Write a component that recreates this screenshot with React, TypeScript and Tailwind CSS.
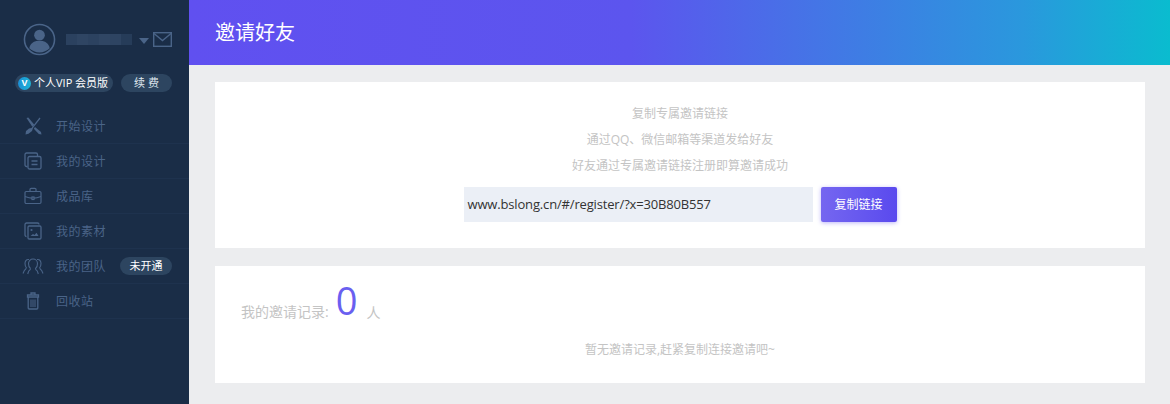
import type { ReactNode } from "react"

const CJK = "font-['Open_Sans','Noto_Sans_CJK_SC',sans-serif]"

const BLUR = ["bg-[#2b415f]", "bg-[#2f4563]", "bg-[#2c4260]", "bg-[#304664]", "bg-[#2e4462]", "bg-[#263c59]"]

const iconClass = "w-[18px] h-[18px] shrink-0 text-[#4a6488]"

const NAV_ITEMS: { label: string; badge?: string; icon: ReactNode }[] = [
  {
    label: "开始设计",
    icon: (
      <svg viewBox="0 0 18 18" className={iconClass} fill="currentColor">
        <path d="M2.500 1l1.800-.5 6 7.200-2 2.100z" />
        <path d="M15.500.5l1 1L9 11l-1 3-3.500 2.800-3 .7.500-3.500 3-2.500 2.500-.5z" />
        <path d="M11 10l6 5 .5 2.500-2.700-.5-5-5.200z" />
      </svg>
    ),
  },
  {
    label: "我的设计",
    icon: (
      <svg viewBox="0 0 18 18" className={iconClass} fill="none" stroke="currentColor" strokeWidth="1.300">
        <path d="M3.500 14.500H2.500A1.500 1.500 0 0 1 1 13V2.500A1.500 1.500 0 0 1 2.500 1H12a1.500 1.500 0 0 1 1.500 1.500V4" />
        <rect x="4" y="4.500" width="13" height="12.500" rx="1.500" />
        <path d="M7.500 9h6M7.500 12.500h6" />
      </svg>
    ),
  },
  {
    label: "成品库",
    icon: (
      <svg viewBox="0 0 18 18" className={iconClass} fill="none" stroke="currentColor" strokeWidth="1.200">
        <rect x="1" y="4.500" width="16" height="12" rx="1.200" />
        <path d="M6 4.500V2.500A1.200 1.200 0 0 1 7.200 1.300h3.600A1.200 1.200 0 0 1 12 2.500v2" />
        <path d="M1 9.500c4 1.500 5.500 1.700 7 1.700M17 9.500c-4 1.500-5.500 1.700-7 1.700" />
        <rect x="8" y="10" width="2" height="2.500" />
      </svg>
    ),
  },
  {
    label: "我的素材",
    icon: (
      <svg viewBox="0 0 18 18" className={iconClass} fill="none" stroke="currentColor" strokeWidth="1.300">
        <path d="M2.500 14.500A1.500 1.500 0 0 1 1 13V2.500A1.500 1.500 0 0 1 2.500 1H13.500A1.500 1.500 0 0 1 15 2.500" />
        <rect x="4" y="4" width="13" height="13" rx="1.200" />
        <circle cx="7.500" cy="8" r="1.100" fill="currentColor" stroke="none" />
        <path d="M6.500 14l2.500-2 1.500 1 2-2.200 2 3.200z" fill="currentColor" stroke="none" />
      </svg>
    ),
  },
  {
    label: "我的团队",
    badge: "未开通",
    icon: (
      <svg viewBox="0 0 22 18" className="w-[22px] h-[18px] shrink-0 text-[#4a6488]" fill="none" stroke="currentColor" strokeWidth="1.100">
        <path d="M8.500 11.500C7 10.500 6.500 8.500 6.500 6.500A4.500 4.500 0 0 1 11 2a4.500 4.500 0 0 1 4.500 4.500c0 2-.5 4-2 5 0 1.500 1 2 1.800 2.500l1 3" />
        <path d="M8.500 11.500c0 1.500-1 2-1.800 2.500l-1 3" />
        <path d="M7 2.500C4 2 3 4.500 3 6.500c0 2 .5 3 1.300 4 0 1.500-.5 2-2 3L1 16.500" />
        <path d="M15 2.500c3-.5 4 2 4 4 0 2-.5 3-1.300 4 0 1.500.5 2 2 3l1.300 3" />
      </svg>
    ),
  },
  {
    label: "回收站",
    icon: (
      <svg viewBox="0 0 18 18" className={iconClass} fill="none" stroke="currentColor" strokeWidth="1.300">
        <path d="M7 2.500V1h4v1.500M3.500 3h11v2h-11z" />
        <path d="M4.200 5v11a1 1 0 0 0 1 1h7.600a1 1 0 0 0 1-1V5" />
        <path d="M7 7.500V15M9 7.500V15M11 7.500V15" strokeWidth="1" />
      </svg>
    ),
  },
]

function Sidebar() {
  return (
    <aside className="w-[189px] shrink-0 bg-[#1a2d47] flex flex-col">
      <div className="h-[64px] flex items-center pl-[23px] pt-[15px]">
        <svg viewBox="0 0 34 34" className="w-[33px] h-[33px] shrink-0 text-[#4a6488]" fill="currentColor">
          <circle cx="17" cy="17" r="15.500" fill="none" stroke="currentColor" strokeWidth="1.600" />
          <circle cx="17" cy="12.500" r="5.500" />
          <path d="M6.500 26c1-5 4-6.500 7-7.500h7c3 1 6 2.500 7 7.500a15 15 0 0 1-21 0z" />
        </svg>
        <div className="ml-[10px] flex">
          {BLUR.map((color, i) => (
            <div key={i} className={`w-[11px] h-[11px] ${color}`} />
          ))}
        </div>
        <div className="ml-[7px] w-0 h-0 border-x-[5px] border-x-transparent border-t-[6px] border-t-[#4a6488] mt-[2px]" />
        <svg viewBox="0 0 19 15" className="ml-[4px] w-[19px] h-[15px] text-[#4a6488]" fill="none" stroke="currentColor" strokeWidth="1.400">
          <rect x="0.700" y="0.700" width="17.600" height="13.600" />
          <path d="M1 1.500l8.500 7 8.500-7" />
        </svg>
      </div>
      <div className="h-[45px] pl-[15px] pt-[10px] flex items-start gap-[8px]">
        <div className="w-[98px] h-[18px] rounded-full bg-[#2d4560] flex items-center pl-[3px]">
          <span className="w-[13px] h-[13px] rounded-full bg-gradient-to-r from-[#1c8fd6] to-[#1fb5d6] text-white text-[9px] font-bold leading-[13px] text-center font-['Liberation_Sans',sans-serif]">
            V
          </span>
          <span className={`ml-[3px] text-[11px] text-white whitespace-nowrap ${CJK}`}>个人VIP 会员版</span>
        </div>
        <div className={`w-[51px] h-[18px] rounded-full bg-[#2d4560] text-center text-[11px] leading-[18px] text-[#dfe5ee] ${CJK}`}>
          续 费
        </div>
      </div>
      <nav className="flex flex-col">
        {NAV_ITEMS.map((item) => (
          <div key={item.label} className="h-[35px] border-b border-[#1e324e] flex items-center pl-[24px]">
            <div className="w-[18px] flex justify-center">{item.icon}</div>
            <span className={`ml-[14px] pt-[1px] text-[12px] tracking-[0.5px] text-[#4a6488] ${CJK}`}>{item.label}</span>
            {item.badge && (
              <span className={`ml-auto mr-[17px] w-[52px] h-[18px] rounded-full bg-[#2d4560] text-center text-[11px] leading-[18px] text-white ${CJK}`}>
                {item.badge}
              </span>
            )}
          </div>
        ))}
      </nav>
    </aside>
  )
}

export default function App() {
  return (
    <div className={`w-[1170px] h-[404px] flex overflow-hidden ${CJK}`}>
      <Sidebar />
      <main className="flex-1 min-w-0 bg-[#ecedef] flex flex-col">
        <header className="h-[65px] shrink-0 pl-[26px] bg-[linear-gradient(90deg,#6050f0_0%,#5c55ee_45%,#2a98dd_85%,#0abccf_100%)] flex items-center">
          <h1 className="text-[20px] text-white">邀请好友</h1>
        </header>
        <section className="mt-[17px] mx-[26px] mr-[25px] h-[166px] bg-white flex flex-col items-center pt-[22px]">
          <p className="text-[12px] leading-[20px] text-[#c4c4c4]">复制专属邀请链接</p>
          <p className="mt-[6px] text-[12px] leading-[20px] text-[#c4c4c4]">通过QQ、微信邮箱等渠道发给好友</p>
          <p className="mt-[6px] text-[12px] leading-[20px] text-[#c4c4c4]">好友通过专属邀请链接注册即算邀请成功</p>
          <div className="mt-[11px] flex items-center gap-[8px]">
            <div className="w-[349px] h-[35px] bg-[#ebeff6] pl-[4px] text-[13px] tracking-[-0.16px] leading-[35px] text-[#333333]">
              www.bslong.cn/#/register/?x=30B80B557
            </div>
            <button className="w-[76px] h-[35px] rounded-[2px] bg-gradient-to-r from-[#7566f0] to-[#5a49ee] text-[12px] text-white shadow-[0_1px_4px_rgba(90,73,238,0.4)]">
              复制链接
            </button>
          </div>
        </section>
        <section className="mt-[18px] mx-[26px] mr-[25px] h-[117px] bg-white px-[26px] flex flex-col">
          <div className="h-[70px] flex items-end pb-[14px] text-[#c4c4c4]">
            <span className="text-[14px] leading-[20px]">我的邀请记录:</span>
            <span className="ml-[7px] text-[38px] leading-[44px] text-[#6a5ff0] font-normal">0</span>
            <span className="ml-[9px] -mb-[1px] text-[14px] leading-[20px]">人</span>
          </div>
          <p className="mt-[2px] pt-[2px] text-center text-[12px] leading-[20px] text-[#c4c4c4]">暂无邀请记录,赶紧复制连接邀请吧~</p>
        </section>
      </main>
    </div>
  )
}
